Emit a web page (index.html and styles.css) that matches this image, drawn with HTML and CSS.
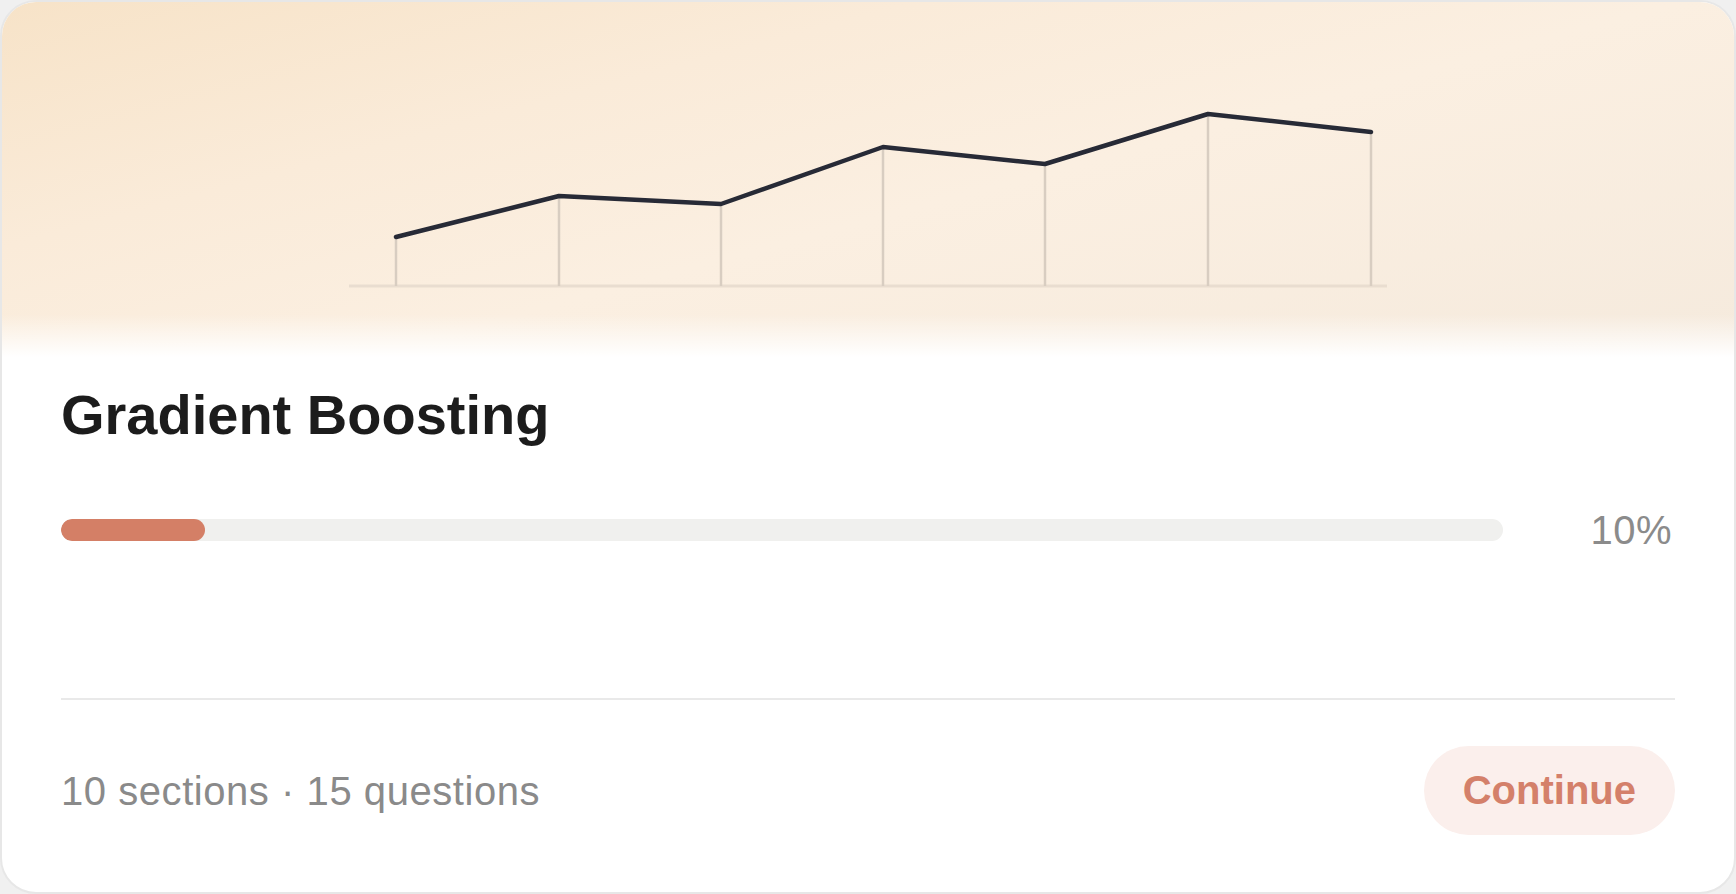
FILE: index.html
```html
<!DOCTYPE html>
<html lang="en">
<head>
<meta charset="utf-8">
<title>Gradient Boosting</title>
<link rel="stylesheet" href="styles.css">
</head>
<body>
<div class="card">
  <div class="hero">
    <svg class="chart" width="1732" height="355" viewBox="2 2 1732 355" xmlns="http://www.w3.org/2000/svg" aria-hidden="true">
      <line x1="349" y1="286" x2="1387" y2="286" stroke="#e9ddd0" stroke-width="3"/>
      <g stroke="#d8cdc1" stroke-width="2.5">
        <line x1="396" y1="237" x2="396" y2="286"/>
        <line x1="559" y1="196" x2="559" y2="286"/>
        <line x1="721" y1="204" x2="721" y2="286"/>
        <line x1="883" y1="147" x2="883" y2="286"/>
        <line x1="1045" y1="164" x2="1045" y2="286"/>
        <line x1="1208" y1="114" x2="1208" y2="286"/>
        <line x1="1371" y1="132" x2="1371" y2="286"/>
      </g>
      <polyline points="396,237 559,196 721,204 883,147 1045,164 1208,114 1371,132" fill="none" stroke="#272a36" stroke-width="4.5" stroke-linejoin="round" stroke-linecap="round"/>
    </svg>
  </div>
  <div class="body">
    <h1 class="title">Gradient Boosting</h1>
    <div class="progress-row">
      <div class="track"><div class="fill" style="width:10%"></div></div>
      <span class="pct">10%</span>
    </div>
    <hr class="divider">
    <div class="footer">
      <span class="meta">10 sections · 15 questions</span>
      <button class="btn" type="button">Continue</button>
    </div>
  </div>
</div>
</body>
</html>
```

FILE: styles.css
```css
* {
  box-sizing: border-box;
}

html, body {
  margin: 0;
  padding: 0;
}

body {
  width: 1736px;
  height: 894px;
  background: #f0f0f0;
  font-family: "Liberation Sans", Arial, sans-serif;
  overflow: hidden;
}

.card {
  width: 1736px;
  height: 894px;
  border: 2px solid #e7e7e7;
  border-radius: 36px;
  background: #ffffff;
  overflow: hidden;
  display: flex;
  flex-direction: column;
}

.hero {
  height: 355px;
  flex: none;
  background:
    linear-gradient(to bottom, rgba(255,255,255,0) 0%, rgba(255,255,255,0) 88%, #ffffff 100%),
    linear-gradient(165deg, #f7e3c8 0%, #faebd9 30%, #fbefe1 55%, #f5eadd 100%);
}

.chart {
  display: block;
}

.body {
  padding: 0 59px;
  display: flex;
  flex-direction: column;
}

.title {
  margin: 24px 0 0;
  font-size: 56px;
  line-height: 1.2;
  font-weight: 700;
  color: #1c1c1c;
}

.progress-row {
  margin-top: 58px;
  display: flex;
  align-items: center;
  gap: 62px;
}

.track {
  flex: 1;
  height: 22px;
  border-radius: 11px;
  background: #f0f0ee;
  overflow: hidden;
}

.fill {
  height: 100%;
  border-radius: 11px;
  background: #d47f66;
}

.pct {
  min-width: 110px;
  text-align: right;
  padding-right: 3px;
  font-size: 40px;
  line-height: 1.2;
  letter-spacing: 0.5px;
  color: #8b8b8b;
}

.divider {
  margin: 144px 0 0;
  border: 0;
  height: 2px;
  background: #e9e9e9;
}

.footer {
  margin-top: 46px;
  display: flex;
  align-items: center;
  justify-content: space-between;
}

.meta {
  font-size: 40px;
  line-height: 1.2;
  letter-spacing: 0.55px;
  color: #8a8a8a;
}

.btn {
  border: 0;
  border-radius: 45px;
  background: #fbefec;
  color: #d4806a;
  font-family: "Liberation Sans", Arial, sans-serif;
  font-size: 40px;
  font-weight: 700;
  line-height: 48px;
  padding: 20px 39px 21px;
  cursor: pointer;
}
```
